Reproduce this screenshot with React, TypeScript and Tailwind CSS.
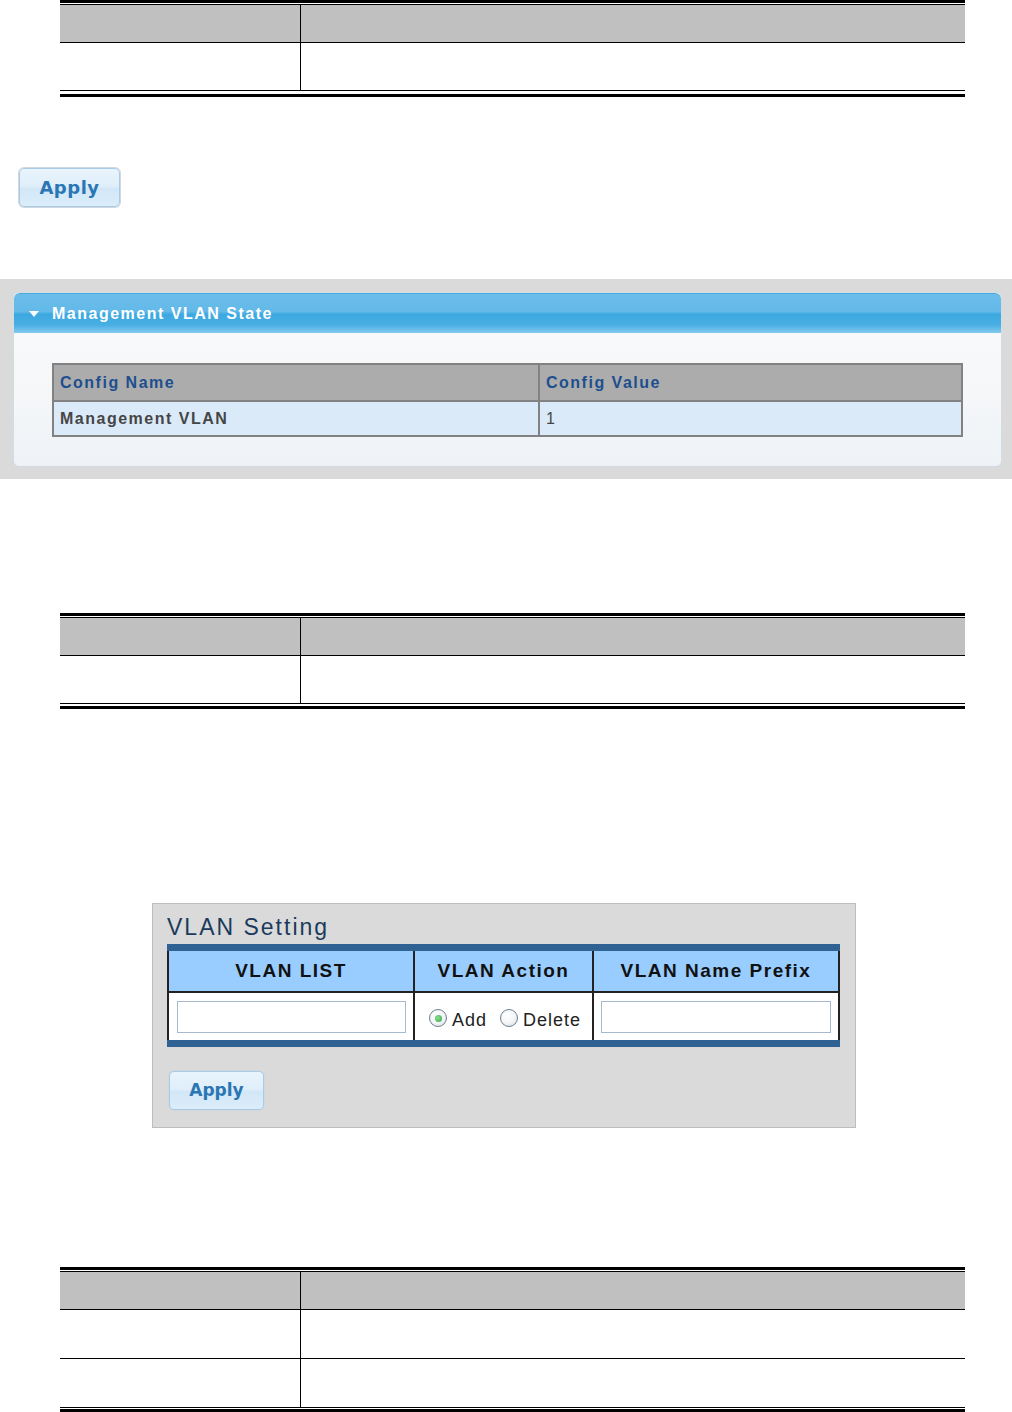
import React from "react";

function DocTable({ rows, gap = 3 }: { rows: number[]; gap?: number }) {
  return (
    <div className="ml-[60px] w-[905px]">
      <div className="h-[3px] bg-black" />
      <div className="mt-px border-t border-black">
        <div className="grid grid-cols-[241px_1fr] h-[37px] bg-[#c0c0c0]">
          <div className="border-r border-black" />
          <div />
        </div>
        {rows.map((h, i) => (
          <div
            key={i}
            className="grid grid-cols-[241px_1fr] border-t border-black"
            style={{ height: h + 1 }}
          >
            <div className="border-r border-black" />
            <div />
          </div>
        ))}
        <div className="border-t border-black" />
      </div>
      <div className="h-[3px] bg-black" style={{ marginTop: gap }} />
    </div>
  );
}

function ApplyButton({ big }: { big?: boolean }) {
  return (
    <button
      className={
        "flex items-center justify-center rounded-[5px] border border-[#a9cbe6] bg-[linear-gradient(to_bottom,#e9f4fc_0%,#dfeefa_48%,#d2e7f7_52%,#dcedfa_100%)] shadow-[0_0_0_1px_#d0d8de] font-bold text-[#2a76b2] " +
        (big ? "w-[101px] h-[39px] text-[18px] tracking-[0.5px]" : "w-[95px] h-[39px] text-[17px]")
      }
      style={{ fontFamily: '"DejaVu Sans", Verdana, sans-serif' }}
    >
      Apply
    </button>
  );
}

function Radio({ checked }: { checked?: boolean }) {
  return (
    <span className="flex h-[18px] w-[18px] shrink-0 items-center justify-center rounded-full border border-[#6f7f8f] bg-[radial-gradient(circle_at_40%_35%,#ffffff_0%,#f2f4f6_55%,#d3d9df_100%)]">
      {checked && (
        <span className="h-[7px] w-[7px] rounded-full bg-[radial-gradient(circle_at_40%_40%,#8fe08a_0%,#2ea24a_100%)]" />
      )}
    </span>
  );
}

export default function App() {
  const sans = { fontFamily: '"Liberation Sans", Arial, sans-serif' };
  return (
    <div className="relative h-[1412px] w-[1012px] overflow-hidden bg-white" style={sans}>
      {/* Table 1 */}
      <DocTable rows={[47]} />

      {/* Apply button */}
      <div className="mt-[71px] ml-[19px]">
        <ApplyButton big />
      </div>

      {/* Management VLAN State */}
      <div className="mt-[72px] h-[200px] bg-[#dadada] pl-[13px] pr-[10px] pt-[13px]">
        <div className="h-[175px] rounded-[6px] border border-[#d3dbe3] bg-[linear-gradient(to_bottom,#f9fafc_0%,#f5f7f9_60%,#eef2f6_100%)] overflow-hidden">
          <div className="flex h-[40px] items-center rounded-t-[6px] border-t border-[#4aa8e0] bg-[linear-gradient(to_bottom,#6cbde9_0%,#62b9e8_45%,#3ca8e0_52%,#49afe3_80%,#86caf0_100%)] pl-[15px]">
            <svg width="10" height="6" viewBox="0 0 10 6" className="mr-[13px] mt-[1px]">
              <path d="M0 0 L10 0 L5 6 Z" fill="#ffffff" />
            </svg>
            <span className="text-[16px] font-bold tracking-[1.5px] text-white">
              Management VLAN State
            </span>
          </div>
          <div className="pt-[30px] pl-[38px]">
            <div className="w-[911px] border-2 border-[#828282]">
              <div className="grid grid-cols-[486px_1fr] h-[35px] bg-[#acacac]">
                <div className="flex items-center border-r-2 border-[#828282] pl-[6px] text-[16px] font-bold tracking-[1.5px] text-[#1d4f8e]">
                  Config Name
                </div>
                <div className="flex items-center pl-[6px] text-[16px] font-bold tracking-[1.5px] text-[#1d4f8e]">
                  Config Value
                </div>
              </div>
              <div className="grid grid-cols-[486px_1fr] h-[35px] border-t-2 border-[#828282] bg-[#daeaf9]">
                <div className="flex items-center border-r-2 border-[#828282] pl-[6px] text-[16px] font-bold tracking-[1.5px] text-[#454545]">
                  Management VLAN
                </div>
                <div className="flex items-center pl-[6px] text-[16px] text-[#454545]">1</div>
              </div>
            </div>
          </div>
        </div>
      </div>

      {/* Table 2 */}
      <div className="mt-[134px]">
        <DocTable rows={[47]} gap={2} />
      </div>

      {/* VLAN Setting */}
      <div className="mt-[194px] ml-[152px] h-[225px] w-[704px] border border-[#bdbdbd] bg-[#dadada] pl-[14px]">
        <div className="h-[40px] pt-[8px] text-[23px] leading-[30px] tracking-[2px] text-[#1a3b5c]">
          VLAN Setting
        </div>
        <div className="w-[673px] bg-[#2f6193] pt-[7px] pb-[7px]">
          <div className="border-x-2 border-[#222222]">
            <div className="grid grid-cols-[246px_179px_1fr] h-[42px] border-b-2 border-[#222222] bg-[#99ccff] text-[19px] font-bold tracking-[1.5px] text-[#111111]">
              <div className="flex items-center justify-center border-r-2 border-[#222222]">VLAN LIST</div>
              <div className="flex items-center justify-center border-r-2 border-[#222222]">VLAN Action</div>
              <div className="flex items-center justify-center">VLAN Name Prefix</div>
            </div>
            <div className="grid grid-cols-[246px_179px_1fr] h-[47px] bg-white">
              <div className="flex items-center border-r-2 border-[#222222] pl-[8px]">
                <div className="h-[32px] w-[229px] border border-[#a7bacd] bg-white" />
              </div>
              <div className="flex items-center border-r-2 border-[#222222] pl-[14px] pt-[3px] text-[18px] leading-[20px] tracking-[1px] text-[#222222]">
                <Radio checked />
                <span className="ml-[5px] mt-[3px]">Add</span>
                <span className="ml-[13px] flex items-center">
                  <Radio />
                </span>
                <span className="ml-[5px] mt-[3px]">Delete</span>
              </div>
              <div className="flex items-center pl-[7px]">
                <div className="h-[32px] w-[230px] border border-[#a7bacd] bg-white" />
              </div>
            </div>
          </div>
        </div>
        <div className="mt-[24px] ml-[2px]">
          <ApplyButton />
        </div>
      </div>

      {/* Table 3 */}
      <div className="mt-[139px]">
        <DocTable rows={[48, 48]} gap={1} />
      </div>
    </div>
  );
}
